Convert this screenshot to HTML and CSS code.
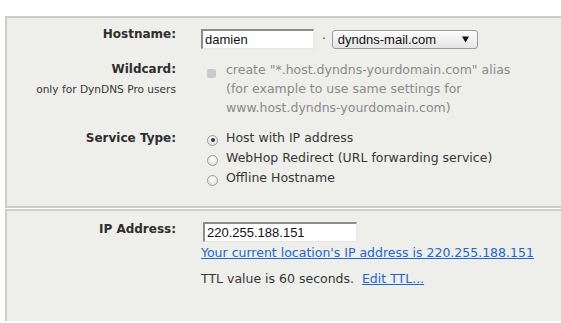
FILE: index.html
```html
<!DOCTYPE html>
<html>
<head>
<meta charset="utf-8">
<link rel="stylesheet" href="styles.css">
</head>
<body>
<div class="panel p1">
  <div class="label l-host">Hostname:</div>
  <div class="field f-host">
    <div class="input in-host">damien</div>
    <span class="dot">·</span>
    <div class="select"><span class="sel-text">dyndns-mail.com</span><svg class="arrow" width="7" height="7" viewBox="0 0 7 7"><path d="M0 0.5 H7 L3.5 6.5 Z" fill="#111"/></svg></div>
  </div>

  <div class="label l-wild">Wildcard:<div class="note">only for DynDNS Pro users</div></div>
  <div class="field f-wild">
    <span class="check"></span>
    <div class="wild-text">create "*.host.dyndns-yourdomain.com" alias<br>(for example to use same settings for<br>www.host.dyndns-yourdomain.com)</div>
  </div>

  <div class="label l-service">Service Type:</div>
  <div class="field f-service">
    <div class="opt"><span class="radio on"></span>Host with IP address</div>
    <div class="opt"><span class="radio"></span>WebHop Redirect (URL forwarding service)</div>
    <div class="opt"><span class="radio"></span>Offline Hostname</div>
  </div>
</div>

<div class="panel p2">
  <div class="label l-ip">IP Address:</div>
  <div class="field f-ip">
    <div class="input in-ip">220.255.188.151</div>
    <div class="cur"><a href="#">Your current location's IP address is 220.255.188.151</a></div>
    <div class="ttl">TTL value is 60 seconds.&nbsp; <a href="#">Edit TTL...</a></div>
  </div>
</div>
</body>
</html>
```

FILE: styles.css
```css
html, body {
  margin: 0;
  padding: 0;
  background: #fff;
  overflow: hidden;
}
body {
  font-family: "DejaVu Sans", Verdana, sans-serif;
  font-size: 12.5px;
  color: #363636;
  width: 561px;
  height: 323px;
}
.panel {
  background: #eeeeea;
  border: 2px solid #cdcdcb;
  border-right: none;
  margin-left: 5px;
  display: grid;
  grid-template-columns: 169px 1fr;
  column-gap: 25px;
  align-items: start;
}
.p1 {
  margin-top: 16px;
  padding: 9px 0 18px 0;
  row-gap: 11px;
}
.p2 {
  margin-top: 1px;
  padding: 11px 0 0 0;
  border-bottom: none;
  height: 99px;
}
.label {
  text-align: right;
  font-weight: bold;
  font-size: 12px;
  color: #2e2e2e;
}
.l-host { line-height: 15px; }
.l-wild { line-height: 19px; }
.l-service { line-height: 20px; }
.l-ip { line-height: 14px; }
.note {
  font-weight: normal;
  font-size: 10.6px;
  line-height: 21px;
  color: #363636;
}
.field {
  display: flex;
}
.f-host {
  align-items: center;
  padding-top: 2px;
}
.input {
  box-sizing: border-box;
  height: 20px;
  background: #fff;
  border-style: solid;
  border-width: 2px 1px 1px 2px;
  border-color: #8c8c8c #e6e6e6 #e6e6e6 #8c8c8c;
  font-family: "Liberation Sans", Arial, sans-serif;
  font-size: 13px;
  line-height: 17px;
  color: #111;
  padding-left: 2px;
}
.in-host { width: 113px; }
.dot {
  margin: 0 6px 0 8px;
  color: #444;
  font-size: 12px;
}
.select {
  box-sizing: border-box;
  width: 146px;
  height: 19px;
  border: 1px solid #9a9a9a;
  border-radius: 3px;
  background: linear-gradient(#fdfdfd, #e4e4e4);
  display: flex;
  align-items: center;
  justify-content: space-between;
  padding: 0 8px 0 5px;
  font-family: "Liberation Sans", Arial, sans-serif;
  font-size: 13px;
  color: #111;
}
.arrow {
  display: block;
  flex: none;
}
.f-wild {
  align-items: flex-start;
  color: #8a8a8a;
  line-height: 19px;
}
.check {
  width: 9px;
  height: 9px;
  border-radius: 2px;
  background: #cacaca;
  margin: 9px 10px 0 6px;
  flex: none;
}
.f-service {
  flex-direction: column;
  line-height: 20px;
}
.opt {
  display: flex;
  align-items: center;
}
.radio {
  box-sizing: border-box;
  width: 11px;
  height: 11px;
  border-radius: 50%;
  border: 1px solid #9c9c9c;
  background: radial-gradient(circle at 50% 35%, #fff, #d8d8d8);
  margin: 4px 8px 0 6px;
  flex: none;
  position: relative;
}
.radio.on::after {
  content: "";
  position: absolute;
  left: 2.5px;
  top: 2.5px;
  width: 4px;
  height: 4px;
  border-radius: 50%;
  background: #333;
}
.f-ip {
  flex-direction: column;
  align-items: flex-start;
}
.in-ip {
  width: 154px;
  margin-left: 2px;
}
.cur {
  margin-top: 2px;
  line-height: 18px;
}
.ttl {
  margin-top: 7px;
  line-height: 20px;
}
a {
  color: #2266cc;
  text-decoration: underline;
}
```
